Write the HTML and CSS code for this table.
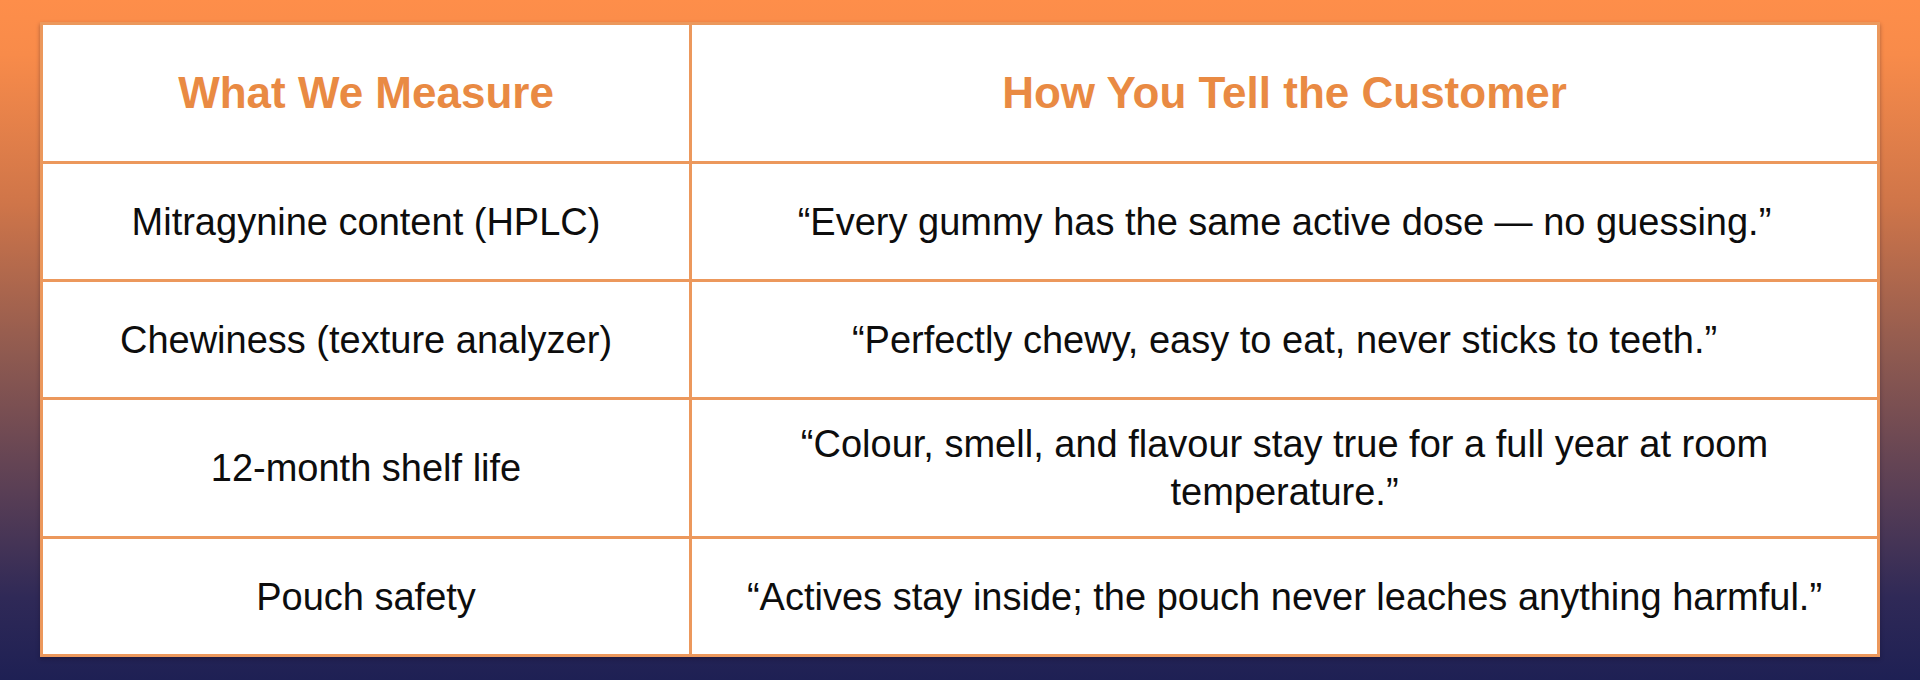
FILE: index.html
```html
<!DOCTYPE html>
<html lang="en">
<head>
<meta charset="utf-8">
<title>What We Measure</title>
<link rel="stylesheet" href="styles.css">
</head>
<body>
<main class="page">
  <div class="grid-table" role="table">
    <div class="cell head" role="columnheader">What We Measure</div>
    <div class="cell head" role="columnheader">How You Tell the Customer</div>

    <div class="cell" role="cell">Mitragynine content (HPLC)</div>
    <div class="cell wide" role="cell">“Every gummy has the same active dose — no guessing.”</div>

    <div class="cell" role="cell">Chewiness (texture analyzer)</div>
    <div class="cell wide" role="cell">“Perfectly chewy, easy to eat, never sticks to teeth.”</div>

    <div class="cell" role="cell">12-month shelf life</div>
    <div class="cell wide" role="cell">“Colour, smell, and flavour stay true for a full year at room temperature.”</div>

    <div class="cell" role="cell">Pouch safety</div>
    <div class="cell wide" role="cell">“Actives stay inside; the pouch never leaches anything harmful.”</div>
  </div>
</main>
</body>
</html>
```

FILE: styles.css
```css
* { box-sizing: border-box; }

html, body {
  margin: 0;
  height: 100%;
}

body {
  background: linear-gradient(180deg,
    #fe8e4a 0%,
    #f88b4a 8%,
    #cf7549 30%,
    #8f5a50 52%,
    #5a3f55 72%,
    #2f2957 88%,
    #1e2054 100%);
  font-family: "Liberation Sans", Arial, sans-serif;
}

.page {
  padding: 22px 40px 23px;
}

.grid-table {
  display: grid;
  grid-template-columns: 646px 1fr;
  gap: 3px;
  padding: 3px;
  background: #ec985c;
  box-shadow: 0 2px 4px rgba(20, 10, 30, 0.35);
}

.cell {
  background: #ffffff;
  display: flex;
  align-items: center;
  justify-content: center;
  text-align: center;
  min-height: 115px;
  padding: 20px 30px;
  font-size: 38px;
  line-height: 48px;
  color: #0d0d0d;
}

.cell.head {
  min-height: 136px;
  font-size: 44px;
  font-weight: bold;
  color: #e98a43;
}
```
